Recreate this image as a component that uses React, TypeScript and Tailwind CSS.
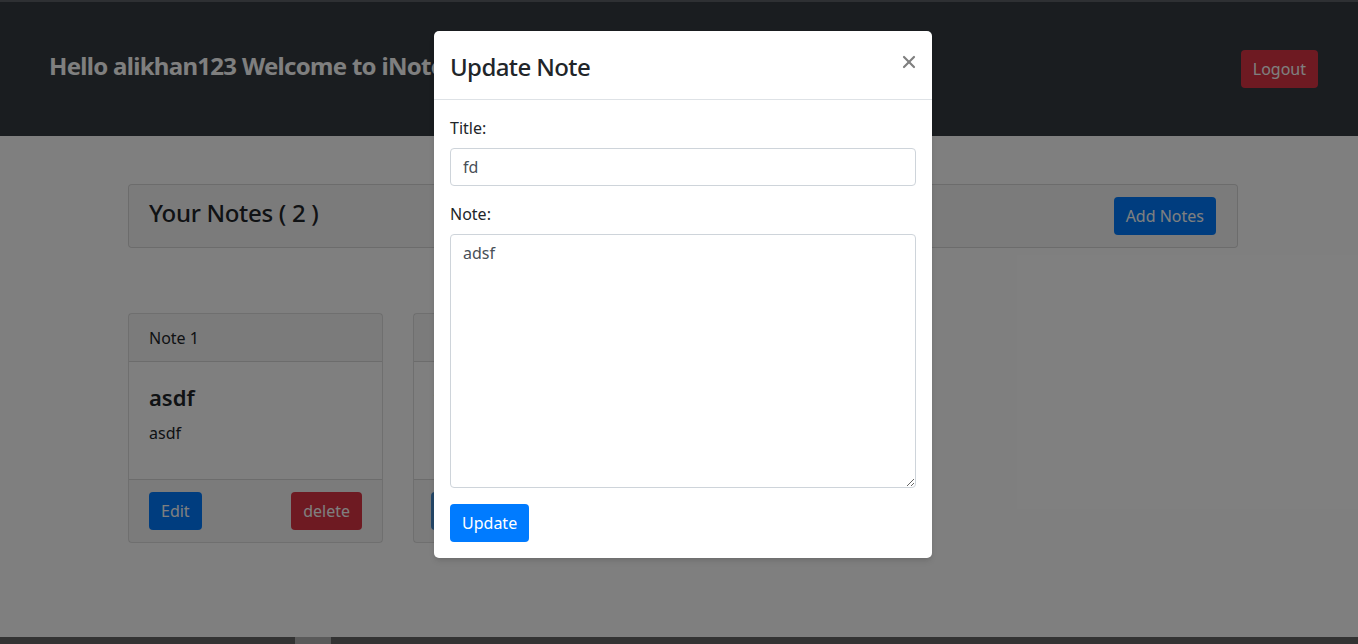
import { X } from 'lucide-react';

const font = { fontFamily: '"Noto Sans", "Segoe UI", sans-serif' };

const notes = [
  { id: 1, title: 'asdf', body: 'asdf' },
  { id: 2, title: 'fd', body: 'adsf' },
];

export default function App() {
  return (
    <div className="h-screen flex flex-col overflow-hidden text-[#212529]" style={font}>
      <div className="relative flex-1 overflow-hidden bg-white">
        {/* page */}
        <div className="h-[2px] bg-[#5c6166]" />
        <nav className="h-[134px] bg-[#343a40] flex items-center justify-between pl-[49px] pr-10">
          <h4 className="text-2xl font-bold text-white tracking-[-0.7px] pb-1.5">Hello alikhan123 Welcome to iNotebook</h4>
          <button className="h-[38px] px-3 rounded bg-[#dc3545] text-white text-base">Logout</button>
        </nav>

        <div className="ml-[128px] w-[1110px] pt-12">
          <div className="h-16 flex items-center justify-between pl-5 pr-[21px] border border-black/[0.125] bg-black/[0.03] rounded">
            <h4 className="text-2xl font-medium tracking-[-0.3px] pb-1.5">Your Notes ( 2 )</h4>
            <button className="h-[38px] px-3 rounded bg-[#007bff] text-white text-base">Add Notes</button>
          </div>

          <div className="flex gap-[30px] mt-[65px]">
            {notes.map((n) => (
              <div key={n.id} className="w-[255px] border border-black/[0.125] rounded bg-white">
                <div className="h-12 px-5 flex items-center bg-black/[0.03] border-b border-black/[0.125] text-base">
                  Note {n.id}
                </div>
                <div className="h-[117px] px-5 pt-5">
                  <h5 className="text-[22px] font-semibold leading-[1.4] mb-2">{n.title}</h5>
                  <p className="text-base leading-6">{n.body}</p>
                </div>
                <div className="h-[63px] pl-5 pr-[20px] flex items-center justify-between bg-black/[0.03] border-t border-black/[0.125]">
                  <button
                    className={
                      n.id === 2
                        ? 'h-[38px] px-3 -ml-[3px] rounded bg-[#4a8fd0] text-white text-base'
                        : 'h-[38px] px-3 rounded bg-[#007bff] text-white text-base'
                    }
                  >
                    Edit
                  </button>
                  <button className="h-[38px] px-3 rounded bg-[#dc3545] text-white text-base">delete</button>
                </div>
              </div>
            ))}
          </div>
        </div>

        {/* backdrop */}
        <div className="absolute inset-0 bg-black/50" />

        {/* modal */}
        <div className="absolute left-[434px] top-[31px] w-[498px] bg-white rounded-[5px] shadow-md">
          <div className="h-[69px] px-4 flex items-center justify-between border-b border-[#dee2e6]">
            <h3 className="text-2xl font-medium tracking-[-0.6px] pt-1">Update Note</h3>
            <X className="text-[#808080] -mt-1.5 -mr-[3px]" size={20} strokeWidth={2.6} />
          </div>
          <div className="p-4">
            <label className="block text-base leading-6 mb-2">Title:</label>
            <input
              className="block w-full h-[38px] px-3 border border-[#ced4da] rounded text-base text-[#495057] outline-none"
              defaultValue="fd"
            />
            <label className="block text-base leading-6 mb-2 mt-4">Note:</label>
            <textarea
              className="block w-full h-[254px] px-3 py-1.5 border border-[#ced4da] rounded text-base text-[#495057] outline-none"
              defaultValue="adsf"
            />
            <button className="mt-4 h-[38px] px-3 rounded bg-[#007bff] text-white text-base">Update</button>
          </div>
        </div>
      </div>

      {/* horizontal scrollbar */}
      <div className="h-[7px] bg-[#333333] flex">
        <div className="ml-[295px] w-9 bg-[#5a5a5a]" />
      </div>
    </div>
  );
}
